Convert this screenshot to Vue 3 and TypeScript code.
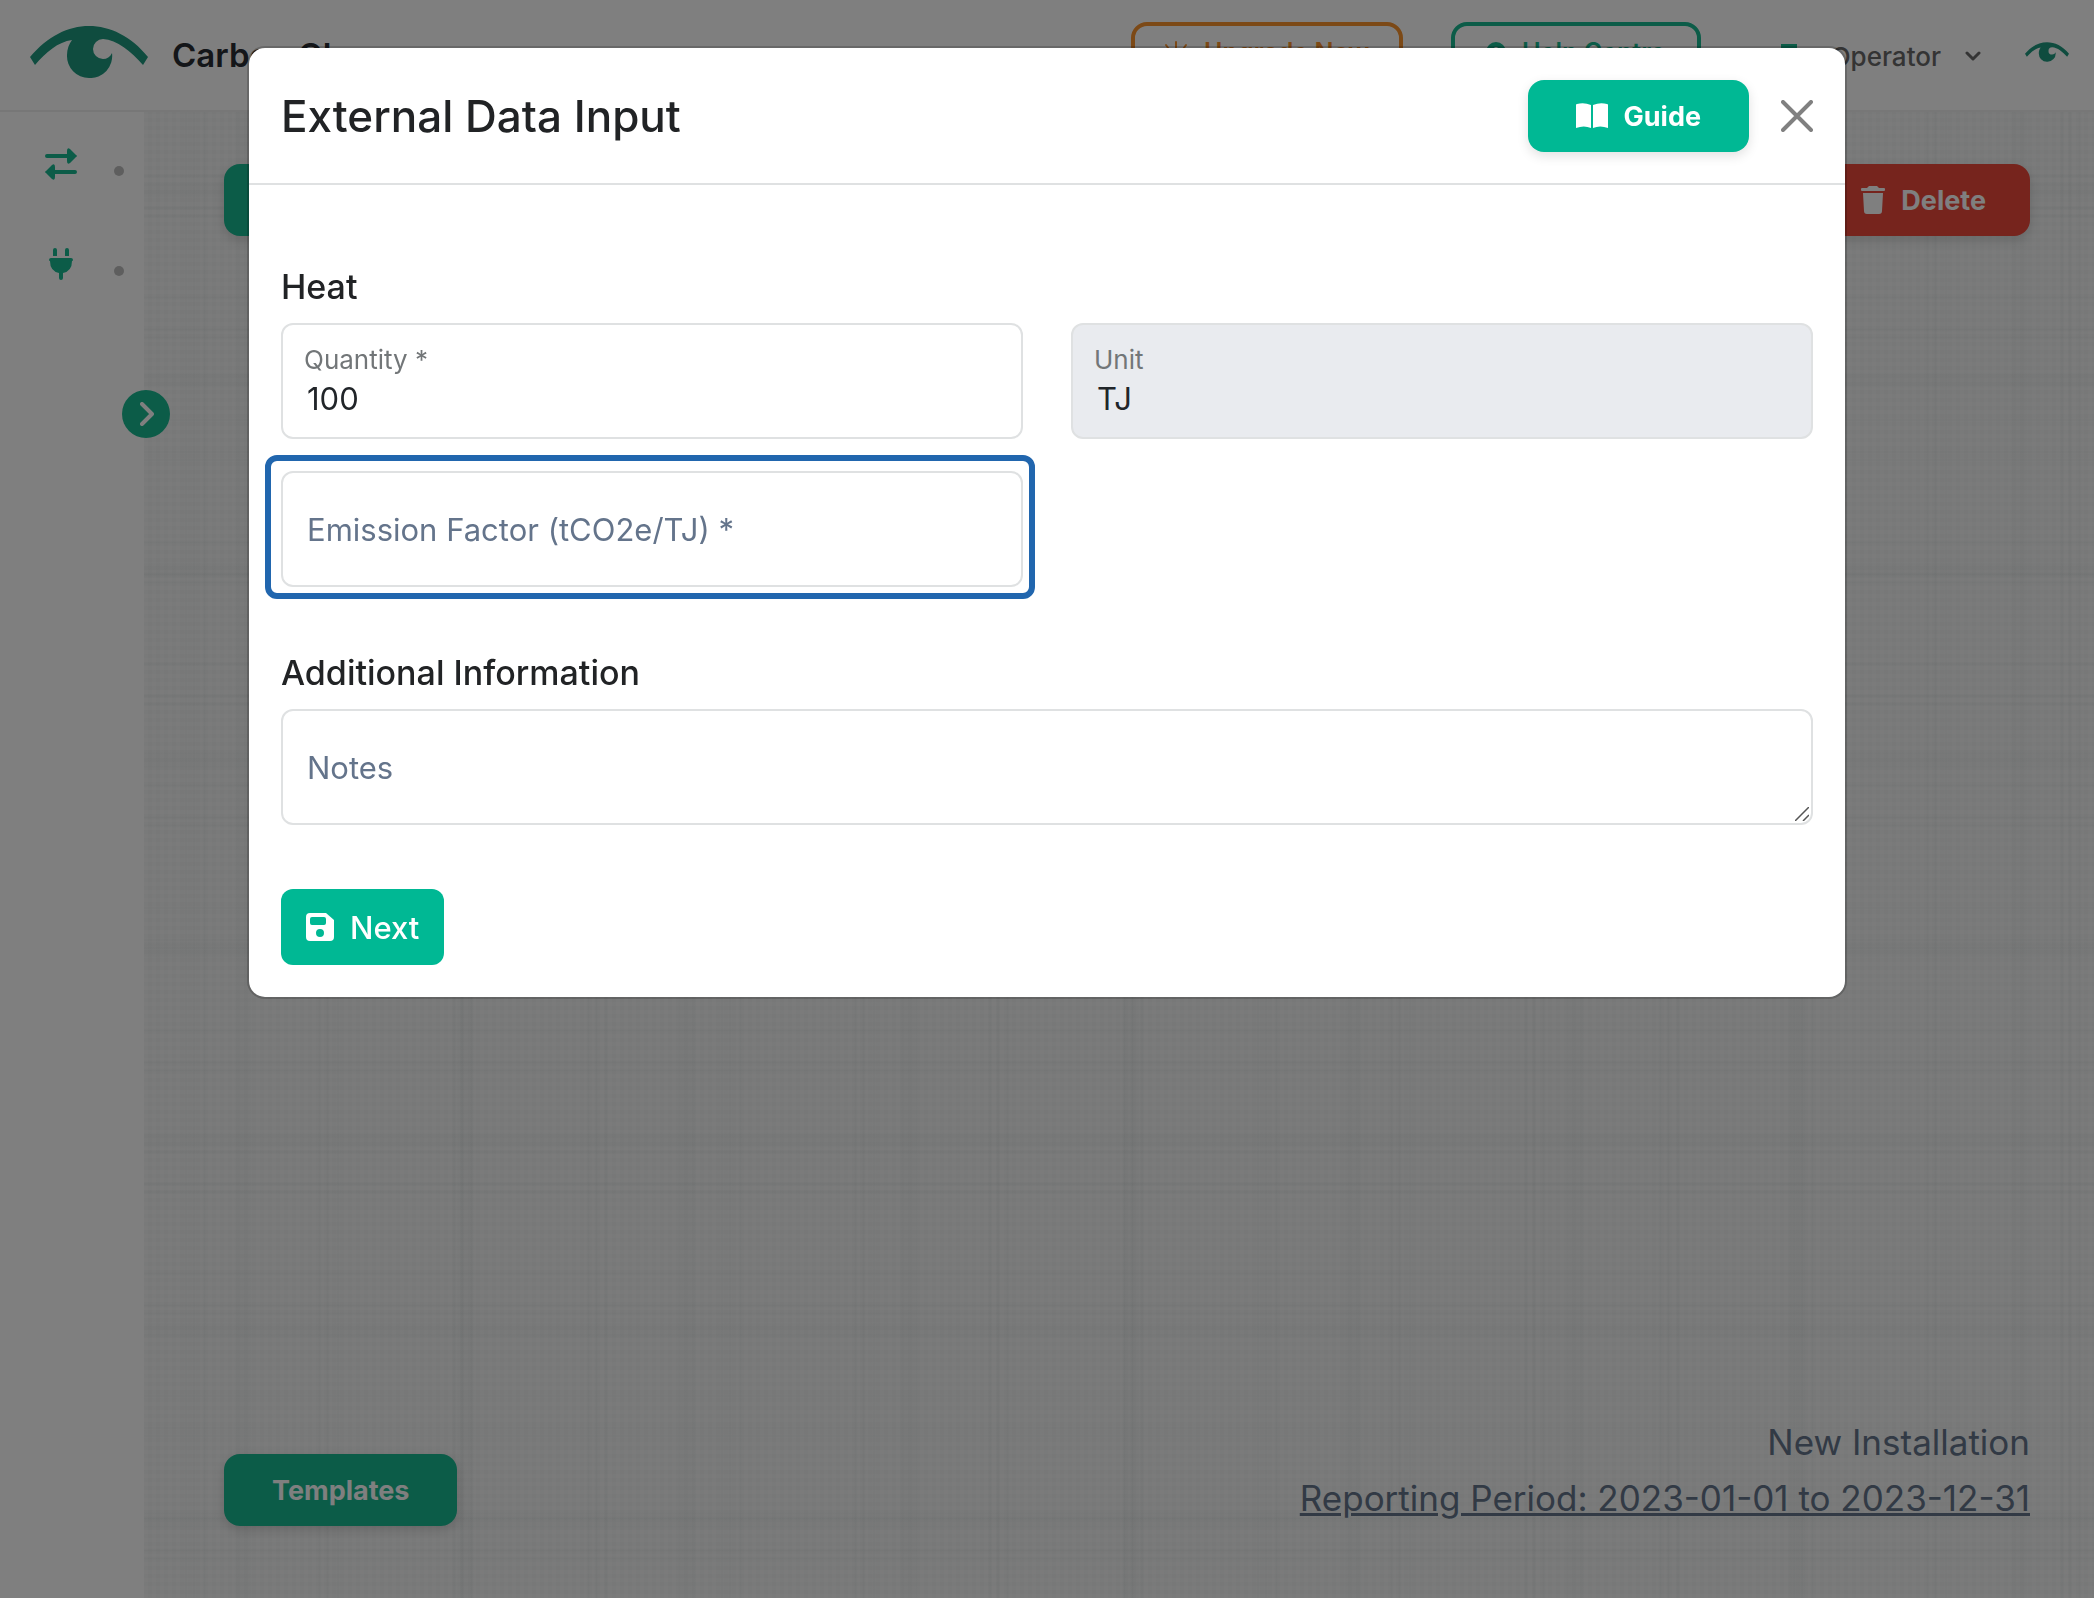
<script setup lang="ts">
import { ref } from 'vue'

const quantity = ref('100')
const unit = ref('TJ')
const emissionFactor = ref('')
const notes = ref('')

const eyePath =
  'M0 31C18 10 38 0 59 0S101 10 118 31L113 39C101 25 87 14 73 13A10 10 0 0 0 63 23A10 10 0 0 0 73 33C77 33 80 31 82 27A22 22 0 0 1 59 52A22 22 0 0 1 37 29C37 23 39 18 42 14C28 16 16 26 5 39Z'
</script>

<template>
  <div class="page">
    <header class="topbar">
      <a class="brand" href="#">
        <svg class="brand-logo" viewBox="0 0 118 52" aria-hidden="true"><path :d="eyePath" /></svg>
        <span>Carbon Glance</span>
      </a>
      <nav class="topnav">
        <button class="outline upgrade" type="button">
          <svg width="24" height="24" viewBox="0 0 24 24" fill="none" stroke="currentColor" stroke-width="2" stroke-linecap="round" aria-hidden="true">
            <path d="M12 2V8M2 5L7 12M22 5L17 12M7 19H17M7 12L12 8L17 12V19H7Z" />
          </svg>
          Upgrade Now
        </button>
        <button class="outline help" type="button">
          <svg width="20" height="20" viewBox="0 0 20 20" aria-hidden="true">
            <circle cx="10" cy="10" r="10" fill="currentColor" />
            <path d="M10 5V6M10 9V15" stroke="#fff" stroke-width="3" />
          </svg>
          Help Centre
        </button>
        <button class="account" type="button">
          <svg width="24" height="24" viewBox="0 0 24 24" fill="#18b890" aria-hidden="true">
            <path d="M4 0H20V12H4ZM0 24V18Q0 14 4 14H20Q24 14 24 18V24Z" />
          </svg>
          <span>Operator</span>
          <svg width="16" height="10" viewBox="0 0 16 10" fill="none" stroke="currentColor" stroke-width="3" stroke-linecap="round" stroke-linejoin="round" aria-hidden="true">
            <path d="M2 2L8 8L14 2" />
          </svg>
        </button>
        <svg class="mini-logo" viewBox="0 0 118 52" aria-hidden="true"><path :d="eyePath" /></svg>
      </nav>
    </header>

    <div class="workspace">
      <aside class="sidebar">
        <a class="side-item" href="#" aria-label="Transfers">
          <svg width="32" height="32" viewBox="0 0 32 32" fill="currentColor" aria-hidden="true">
            <path d="M2 6H22V3Q22 -1 25 1L31 7Q33 8 31 9L25 15Q22 17 22 13V10H2Q0 10 0 8Q0 6 2 6ZM30 22H10V19Q10 15 7 17L1 23Q-1 24 1 25L7 31Q10 33 10 29V26H30Q32 26 32 24Q32 22 30 22Z" />
          </svg>
          <i class="dot"></i>
        </a>
        <a class="side-item" href="#" aria-label="Connections">
          <svg width="32" height="32" viewBox="0 0 32 32" fill="currentColor" aria-hidden="true">
            <path d="M8 8V2Q8 0 10 0Q12 0 12 2V8ZM20 8V2Q20 0 22 0Q24 0 24 2V8ZM6 10H26Q28 10 28 12Q28 13 27 13Q27 23 18 25V30Q18 32 16 32Q14 32 14 30V25Q5 23 5 13Q4 13 4 12Q4 10 6 10Z" />
          </svg>
          <i class="dot"></i>
        </a>
        <button class="expand" type="button" aria-label="Expand sidebar">
          <svg width="14" height="24" viewBox="0 0 14 24" fill="none" stroke="currentColor" stroke-width="4" stroke-linecap="round" stroke-linejoin="round" aria-hidden="true">
            <path d="M2 2L12 12L2 22" />
          </svg>
        </button>
      </aside>

      <main class="canvas">
        <div class="row">
          <button class="btn" type="button">Add</button>
          <button class="btn danger" type="button">
            <svg width="24" height="28" viewBox="0 0 24 28" fill="currentColor" aria-hidden="true">
              <path d="M8 0H16L18 2H23Q24 2 24 3V4Q24 5 23 5H1Q0 5 0 4V3Q0 2 1 2H6ZM2 7H22L21 25Q21 28 18 28H6Q3 28 3 25Z" />
            </svg>
            Delete
          </button>
        </div>
        <div class="row bottom">
          <button class="btn" type="button">Templates</button>
          <div class="period">
            <span>New Installation</span>
            <a href="#">Reporting Period: 2023-01-01 to 2023-12-31</a>
          </div>
        </div>
      </main>
    </div>

    <div class="backdrop">
      <section class="modal" role="dialog" aria-modal="true" aria-labelledby="dialog-title">
        <div class="modal-head">
          <h1 id="dialog-title">External Data Input</h1>
          <div class="modal-actions">
            <button class="btn guide" type="button">
              <svg width="32" height="26" viewBox="0 0 32 26" fill="currentColor" aria-hidden="true">
                <path d="M15 2Q8 -1 1 1Q0 1 0 2V25Q8 22 15 25ZM17 2Q24 -1 31 1Q32 1 32 2V25Q24 22 17 25Z" />
              </svg>
              Guide
            </button>
            <button class="close" type="button" aria-label="Close">
              <svg width="32" height="32" viewBox="0 0 32 32" fill="none" stroke="currentColor" stroke-width="4" stroke-linecap="round" aria-hidden="true">
                <path d="M2 2L30 30M30 2L2 30" />
              </svg>
            </button>
          </div>
        </div>

        <form class="modal-body" @submit.prevent>
          <h2>Heat</h2>
          <div class="fields">
            <div class="field">
              <label for="quantity">Quantity *</label>
              <input id="quantity" v-model="quantity" type="text" />
            </div>
            <div class="field disabled">
              <label for="unit">Unit</label>
              <input id="unit" v-model="unit" type="text" readonly />
            </div>
            <div class="field empty highlighted">
              <label for="factor">Emission Factor (tCO2e/TJ) *</label>
              <input id="factor" v-model="emissionFactor" type="text" />
            </div>
          </div>

          <h2 class="spaced">Additional Information</h2>
          <div class="field empty">
            <label for="notes">Notes</label>
            <textarea id="notes" v-model="notes" rows="1"></textarea>
            <svg class="grip" width="14" height="14" viewBox="0 0 14 14" stroke="#555" stroke-width="1.5" aria-hidden="true">
              <path d="M0 14L14 0M8 14L14 8" />
            </svg>
          </div>

          <button class="next" type="submit">
            <svg width="28" height="28" viewBox="0 0 28 28" fill="currentColor" fill-rule="evenodd" aria-hidden="true">
              <path d="M4 0H20L28 7V24Q28 28 24 28H4Q0 28 0 24V4Q0 0 4 0ZM6 4Q4 4 4 6V10Q4 12 6 12H18Q20 12 20 10V6Q20 4 18 4ZM14 16A4 4 0 1 0 14 24A4 4 0 1 0 14 16Z" />
            </svg>
            Next
          </button>
        </form>
      </section>
    </div>
  </div>
</template>

<style>
body {
  margin: 0;
}
</style>

<style scoped>
* {
  box-sizing: border-box;
}
.page {
  min-height: 100vh;
  display: flex;
  flex-direction: column;
  background: #fff;
  color: #212529;
  font-family: Inter, "Liberation Sans", sans-serif;
}
button,
input,
textarea {
  font-family: inherit;
  margin: 0;
}
a {
  color: inherit;
}
svg {
  flex: none;
}

.topbar {
  display: flex;
  justify-content: space-between;
  align-items: flex-start;
  height: 112px;
  padding: 22px 25px 0 30px;
  border-bottom: 2px solid #eee;
}
.brand {
  display: flex;
  align-items: center;
  gap: 24px;
  height: 60px;
  font-size: 33px;
  font-weight: 600;
  color: #282c32;
  text-decoration: none;
}
.brand-logo {
  width: 118px;
  height: 52px;
  fill: #1e987e;
}
.brand span {
  padding-top: 6px;
}
.mini-logo {
  width: 44px;
  height: 20px;
  margin-left: 44px;
  fill: #1e987e;
}
.topnav {
  display: flex;
  align-items: center;
}
.outline {
  display: flex;
  align-items: center;
  justify-content: center;
  gap: 16px;
  height: 60px;
  border: 4px solid currentColor;
  border-radius: 16px;
  background: none;
  font-size: 25px;
  font-weight: 600;
}
.upgrade {
  width: 272px;
  margin-right: 48px;
  color: #f9922c;
}
.help {
  width: 250px;
  color: #18b890;
}
.account {
  display: flex;
  align-items: center;
  gap: 24px;
  margin-left: 76px;
  padding: 8px 0 0;
  border: 0;
  background: none;
  color: #686868;
  font-size: 26px;
  font-weight: 500;
}
.account span {
  margin-left: 6px;
}

.workspace {
  flex: 1;
  display: flex;
}
.sidebar {
  position: relative;
  width: 144px;
  padding-top: 36px;
  color: #18b890;
}
.side-item {
  display: flex;
  align-items: center;
  justify-content: space-between;
  height: 32px;
  margin-bottom: 68px;
  padding: 0 20px 0 45px;
}
.dot {
  width: 10px;
  height: 10px;
  margin-top: 14px;
  border-radius: 50%;
  background: #bcbcbc;
}
.expand {
  position: absolute;
  top: 278px;
  right: -26px;
  display: flex;
  align-items: center;
  justify-content: center;
  width: 48px;
  height: 48px;
  padding: 0 0 0 2px;
  border: 0;
  border-radius: 50%;
  background: #18b890;
  color: #fff;
}
.canvas {
  flex: 1;
  display: flex;
  flex-direction: column;
  justify-content: space-between;
  padding: 52px 64px 72px 80px;
  /* Woven cloth: fine threads crossed by irregularly spaced darker ones */
  background:
    repeating-linear-gradient(90deg, transparent 0 4px, rgba(70, 90, 90, 0.02) 4px 8px),
    repeating-linear-gradient(0deg, transparent 0 4px, rgba(70, 90, 90, 0.02) 4px 8px),
    repeating-linear-gradient(90deg, transparent 0 40px, rgba(50, 80, 80, 0.03) 42px, transparent 44px 48px, rgba(50, 80, 80, 0.04) 50px, transparent 52px 58px, rgba(50, 80, 80, 0.03) 60px, transparent 62px 134px),
    repeating-linear-gradient(90deg, transparent 0 90px, rgba(50, 80, 80, 0.02) 92px 106px, transparent 108px 222px),
    repeating-linear-gradient(0deg, transparent 0 38px, rgba(50, 80, 80, 0.03) 40px, transparent 42px 46px, rgba(50, 80, 80, 0.04) 48px, transparent 50px 78px, rgba(50, 80, 80, 0.03) 80px, transparent 82px 122px),
    repeating-linear-gradient(0deg, transparent 0 70px, rgba(50, 80, 80, 0.02) 72px 84px, transparent 86px 190px),
    #f6f7f7;
}
.row {
  display: flex;
  justify-content: space-between;
}
.bottom {
  align-items: flex-end;
}
.btn {
  display: flex;
  align-items: center;
  justify-content: center;
  gap: 16px;
  height: 72px;
  padding: 0 48px;
  border: 0;
  border-radius: 16px;
  background: #18b890;
  box-shadow: 0 4px 12px rgba(0, 0, 0, 0.15);
  color: #fff;
  font-size: 27px;
  font-weight: 700;
}
.danger {
  padding: 0 44px;
  background: #ec483a;
}
.period {
  display: flex;
  flex-direction: column;
  align-items: flex-end;
  color: #64748b;
  font-size: 35px;
  line-height: 56px;
}

.backdrop {
  position: fixed;
  inset: 0;
  overflow: auto;
  padding: 46px 32px;
  background: rgba(0, 0, 0, 0.5);
}
.modal {
  max-width: 1600px;
  margin: 0 auto;
  border: 2px solid rgba(0, 0, 0, 0.18);
  border-radius: 18px;
  background: #fff;
  background-clip: padding-box;
}
.modal-head {
  display: flex;
  align-items: center;
  justify-content: space-between;
  padding: 32px 32px 31px;
  border-bottom: 2px solid #dfe1e2;
}
.modal-actions {
  display: flex;
  align-items: center;
  gap: 32px;
}
.guide {
  background: #00b894;
  box-shadow: 0 4px 12px rgba(0, 0, 0, 0.12);
}
.close {
  display: flex;
  padding: 0;
  border: 0;
  background: none;
  color: #808080;
}
h1,
h2 {
  margin: 0;
  color: #212325;
  font-weight: 500;
}
h1 {
  font-size: 44px;
  line-height: 56px;
}
h2 {
  margin-bottom: 15px;
  font-size: 34px;
  line-height: 43px;
}
.spaced {
  margin-top: 64px;
}
.modal-body {
  padding: 80px 32px 32px;
}
.fields {
  display: grid;
  grid-template-columns: 1fr 1fr;
  gap: 32px 48px;
}
.field {
  position: relative;
  display: grid;
  grid-template-rows: 32px 44px;
  height: 116px;
  padding: 19px 24px 17px;
  border: 2px solid #dfe1e2;
  border-radius: 12px;
}
.field label {
  margin-left: -3px;
  color: #727678;
  font-size: 26px;
  line-height: 32px;
}
.field input,
.field textarea {
  width: 100%;
  padding: 0;
  border: 0;
  outline: 0;
  background: none;
  color: #212529;
  font-size: 31px;
  resize: none;
}
.disabled {
  background: #e9ebef;
}
.empty {
  grid-template-rows: 1fr;
}
.empty label,
.empty input,
.empty textarea {
  grid-area: 1 / 1;
}
.empty label {
  align-self: center;
  margin-left: 0;
  color: #64748b;
  font-size: 31px;
}
.highlighted::after {
  content: "";
  position: absolute;
  inset: -18px -14px -14px -18px;
  border: 6px solid #2166ae;
  border-radius: 12px;
  pointer-events: none;
}
.grip {
  position: absolute;
  right: 2px;
  bottom: 2px;
}
.next {
  display: flex;
  align-items: center;
  gap: 16px;
  height: 76px;
  margin-top: 64px;
  padding: 0 25px;
  border: 0;
  border-radius: 12px;
  background: #00b894;
  color: #fff;
  font-size: 31px;
  font-weight: 500;
}
</style>
